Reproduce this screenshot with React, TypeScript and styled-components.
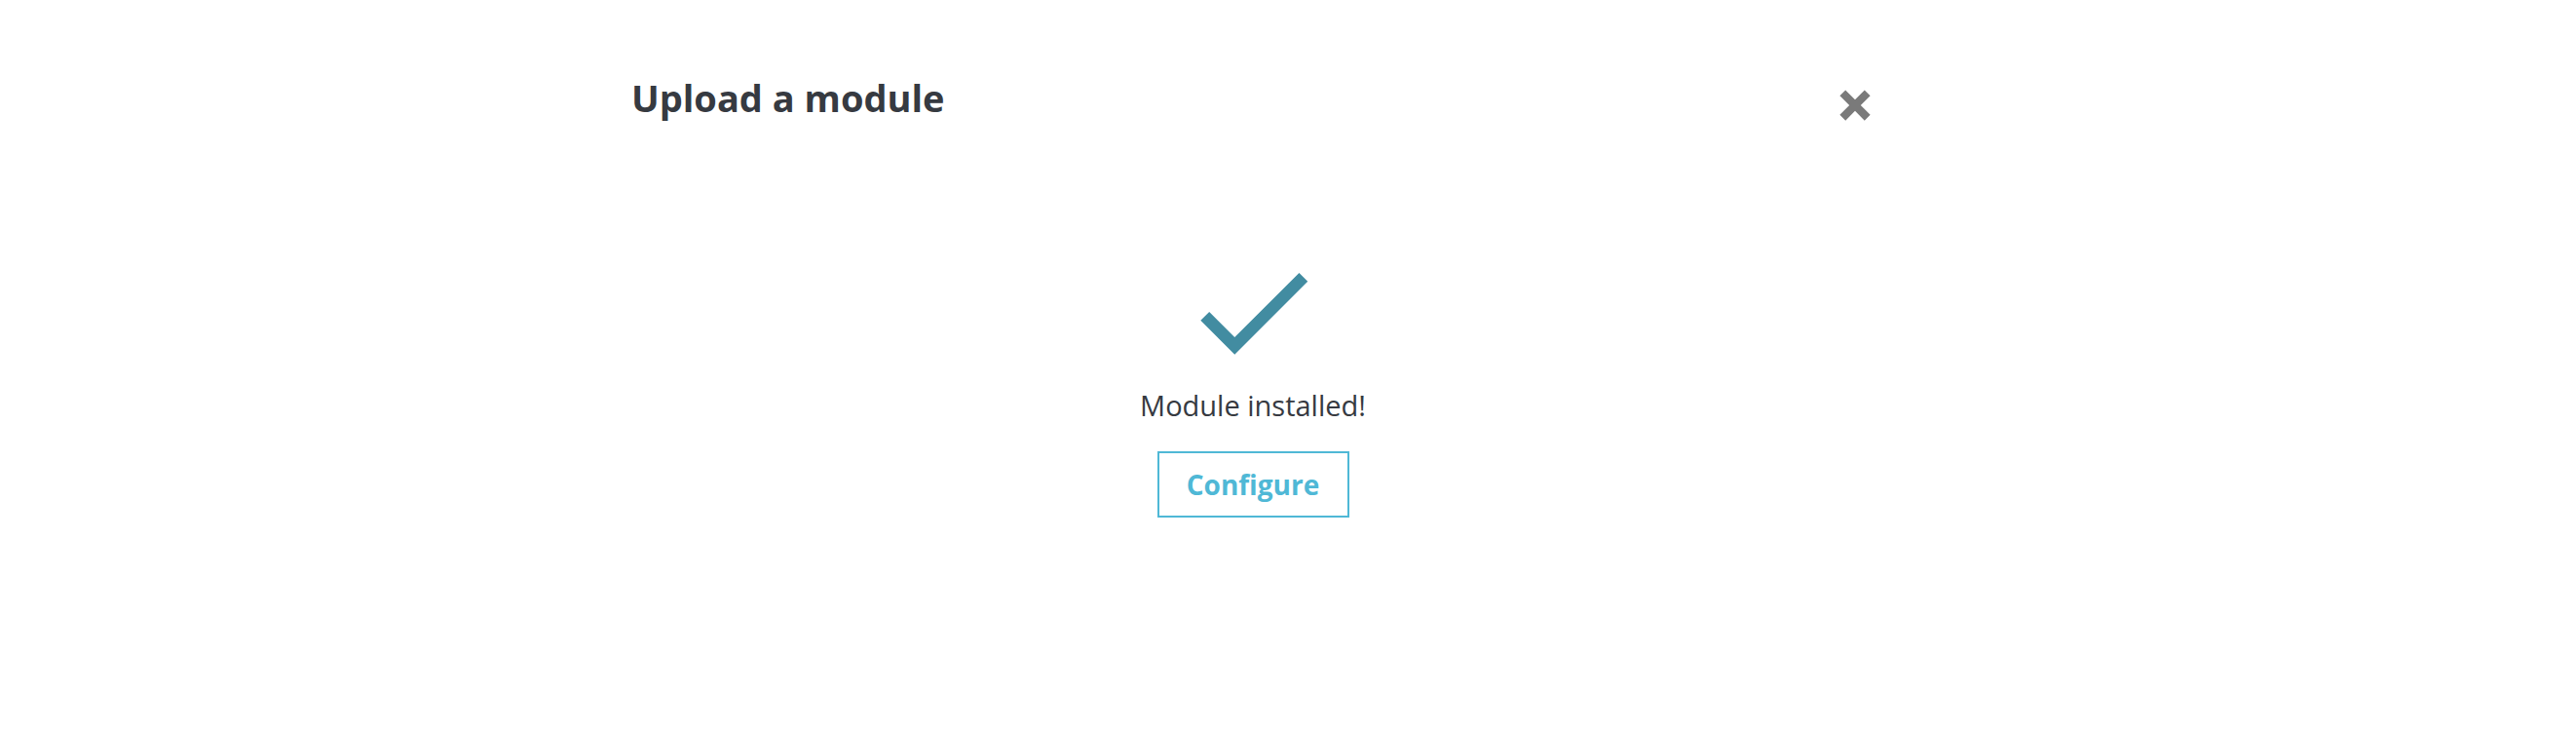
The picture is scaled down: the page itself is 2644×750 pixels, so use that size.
import React from "react";
import styled, { createGlobalStyle } from "styled-components";

const GlobalStyle = createGlobalStyle`
  body {
    margin: 0;
    background: #ffffff;
    font-family: "Open Sans", "Liberation Sans", sans-serif;
    color: #363a41;
  }
`;

const Page = styled.div`
  width: 2644px;
  height: 750px;
  overflow: hidden;
`;

const Modal = styled.div`
  width: 1309px;
  margin-left: 620px;
  padding-top: 75px;
`;

const Header = styled.div`
  display: flex;
  justify-content: space-between;
  align-items: flex-start;
  padding-left: 28px;
`;

const Title = styled.h2`
  margin: 0;
  font-size: 38px;
  font-weight: 700;
  line-height: 50px;
  color: #363a41;
`;

const CloseButton = styled.button`
  border: none;
  background: none;
  padding: 0;
  margin-top: 8px;
  width: 50px;
  height: 50px;
  display: flex;
  align-items: center;
  justify-content: center;
  cursor: pointer;
`;

const Body = styled.div`
  display: flex;
  flex-direction: column;
  align-items: center;
  padding-left: 23px;
  margin-top: 112px;
`;

const CheckIcon = styled.svg`
  width: 150px;
  height: 150px;
`;

const Message = styled.p`
  margin: 2px 0 0;
  font-size: 29px;
  line-height: 38px;
  color: #363a41;
`;

const ConfigureButton = styled.button`
  margin-top: 28px;
  width: 197px;
  height: 68px;
  border: 2px solid #4fb8d6;
  background: #ffffff;
  color: #4fb8d6;
  font-family: "Open Sans", "Liberation Sans", sans-serif;
  font-size: 28px;
  font-weight: 700;
  cursor: pointer;
`;

const App = () => {
  return (
    <>
      <GlobalStyle />
      <Page>
        <Modal>
          <Header>
            <Title>Upload a module</Title>
            <CloseButton aria-label="close">
              <svg width="50" height="50" viewBox="0 0 24 24">
                <path
                  d="M4.5 7.3 7.3 4.5 12 9.2l4.7-4.7 2.8 2.8-4.7 4.7 4.7 4.7-2.8 2.8-4.7-4.7-4.7 4.7-2.8-2.8 4.7-4.7z"
                  fill="#7a7a7a"
                />
              </svg>
            </CloseButton>
          </Header>
          <Body>
            <CheckIcon viewBox="0 0 24 24">
              <path
                d="M9 16.17L4.83 12l-1.42 1.41L9 19 21 7l-1.41-1.41z"
                fill="#428ca1"
              />
            </CheckIcon>
            <Message>Module installed!</Message>
            <ConfigureButton>Configure</ConfigureButton>
          </Body>
        </Modal>
      </Page>
    </>
  );
};

export default App;
